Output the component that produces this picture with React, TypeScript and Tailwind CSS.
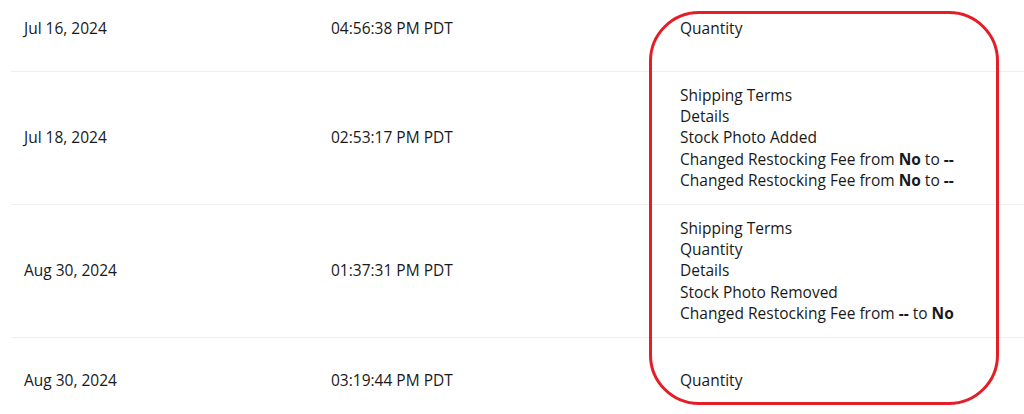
import React from "react";

type Row = { date: string; time: string; changes: React.ReactNode[] };

const rows: Row[] = [
  { date: "Jul 16, 2024", time: "04:56:38 PM PDT", changes: ["Quantity"] },
  {
    date: "Jul 18, 2024",
    time: "02:53:17 PM PDT",
    changes: [
      "Shipping Terms",
      "Details",
      "Stock Photo Added",
      <>Changed Restocking Fee from <b className="font-bold">No</b> to <b className="font-bold">--</b></>,
      <>Changed Restocking Fee from <b className="font-bold">No</b> to <b className="font-bold">--</b></>,
    ],
  },
  {
    date: "Aug 30, 2024",
    time: "01:37:31 PM PDT",
    changes: [
      "Shipping Terms",
      "Quantity",
      "Details",
      "Stock Photo Removed",
      <>Changed Restocking Fee from <b className="font-bold">--</b> to <b className="font-bold">No</b></>,
    ],
  },
  { date: "Aug 30, 2024", time: "03:19:44 PM PDT", changes: ["Quantity"] },
];

export default function App() {
  return (
    <div
      className="relative h-[414px] w-[1024px] overflow-hidden bg-white text-[15.5px] text-[#191919]"
      style={{ fontFamily: '"Open Sans", "Liberation Sans", sans-serif' }}
    >
      <div className="-mt-[13px] pl-[11px]">
        {rows.map((r, i) => (
          <div
            key={i}
            className={`flex min-h-[85px] items-center py-[13px] leading-[21.2px] ${i < rows.length - 1 ? "border-b border-[#efefef]" : ""}`}
          >
            <div className="w-[320px] pl-[13px]">{r.date}</div>
            <div className="w-[349px]">{r.time}</div>
            <div className="flex flex-col">
              {r.changes.map((c, j) => (
                <div key={j}>{c}</div>
              ))}
            </div>
          </div>
        ))}
      </div>
      <div className="pointer-events-none absolute left-[649px] top-[11px] h-[394px] w-[350px] rounded-[50px] border-[3px] border-[#e41e26]" />
    </div>
  );
}
